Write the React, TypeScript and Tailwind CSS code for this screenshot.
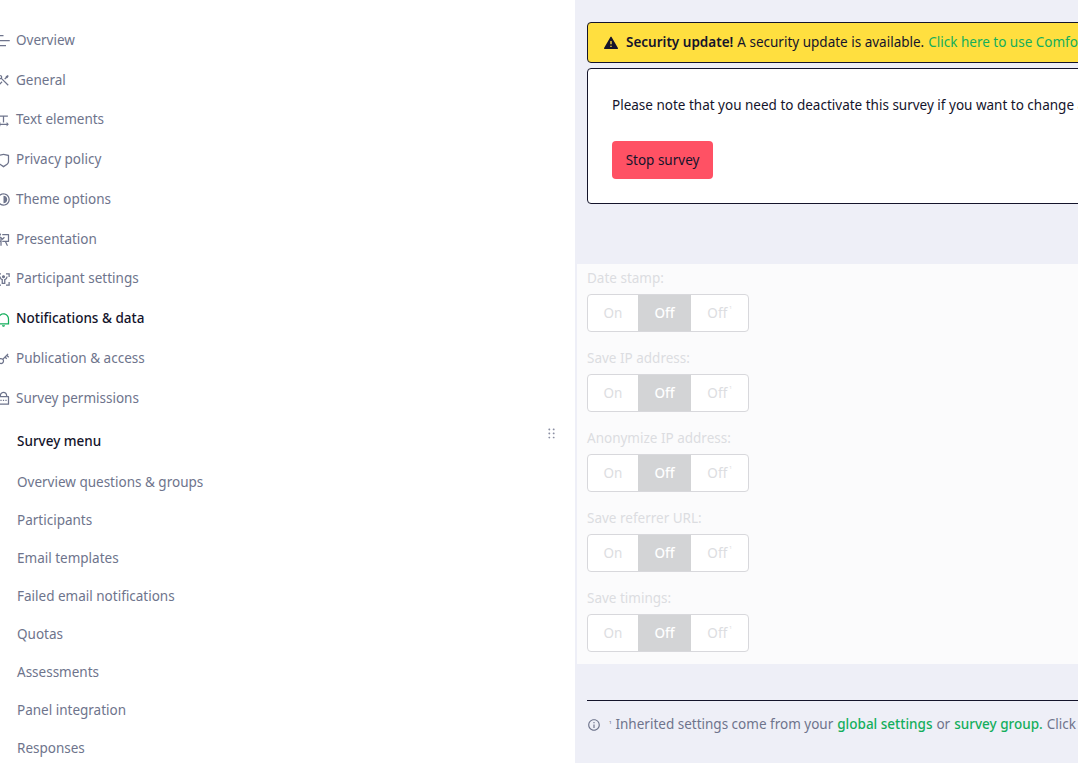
import type { IconType } from "react-icons";
import {
  RiAlertFill,
  RiBarChartHorizontalLine,
  RiBodyScanLine,
  RiContrastLine,
  RiDraggable,
  RiInformationLine,
  RiKey2Line,
  RiLockPasswordLine,
  RiNotificationLine,
  RiPresentationLine,
  RiShieldLine,
  RiTextSpacing,
  RiToolsLine,
} from "react-icons/ri";

const settingsItems: { label: string; icon: IconType; active?: boolean }[] = [
  { label: "Overview", icon: RiBarChartHorizontalLine },
  { label: "General", icon: RiToolsLine },
  { label: "Text elements", icon: RiTextSpacing },
  { label: "Privacy policy", icon: RiShieldLine },
  { label: "Theme options", icon: RiContrastLine },
  { label: "Presentation", icon: RiPresentationLine },
  { label: "Participant settings", icon: RiBodyScanLine },
  { label: "Notifications & data", icon: RiNotificationLine, active: true },
  { label: "Publication & access", icon: RiKey2Line },
  { label: "Survey permissions", icon: RiLockPasswordLine },
];

const menuItems = [
  "Overview questions & groups",
  "Participants",
  "Email templates",
  "Failed email notifications",
  "Quotas",
  "Assessments",
  "Panel integration",
  "Responses",
];

const toggles = ["Date stamp:", "Save IP address:", "Anonymize IP address:", "Save referrer URL:", "Save timings:"];

function Sidebar() {
  return (
    <aside className="flex w-[575px] shrink-0 flex-col bg-white pt-[20px]">
      {settingsItems.map((item) => {
        const Icon = item.icon;
        return (
          <div key={item.label} className="flex h-[39.75px] shrink-0 items-center">
            <Icon className={`ml-[-4px] mt-[2px] size-[15px] shrink-0 ${item.active ? "text-[#14ae5c]" : "text-[#6e748c]"}`} />
            <span className={`ml-[5px] text-[13.5px] ${item.active ? "font-medium text-[#14142b]" : "text-[#6e748c]"}`}>
              {item.label}
            </span>
          </div>
        );
      })}
      <div className="relative flex h-[37px] shrink-0 items-center pl-[17px] pt-[11px] text-[13.5px] font-medium text-[#14142b]">
        Survey menu
        <RiDraggable className="absolute left-[544px] top-[8px] size-[15px] text-[#8b8fa3]" />
      </div>
      <div className="mt-[9px] flex flex-col pl-[17px]">
        {menuItems.map((label) => (
          <div key={label} className="flex h-[38px] shrink-0 items-center text-[13.5px] text-[#6e748c]">
            {label}
          </div>
        ))}
      </div>
    </aside>
  );
}

function DisabledToggle({ label }: { label: string }) {
  return (
    <div className="h-[80px] shrink-0 pt-[4px]">
      <div className="h-[21px] text-[13.5px] leading-[21px] text-[#dcdde1]">{label}</div>
      <div className="mt-[5px] flex h-[38px] w-[162px] overflow-hidden rounded-[4px] border border-[#d8d8dc] bg-white text-[13.5px] text-[#dcdde1]">
        <div className="flex w-[50px] items-center justify-center">On</div>
        <div className="flex w-[53px] items-center justify-center bg-[#d3d4d6] font-medium text-white">Off</div>
        <div className="flex flex-1 items-center justify-center">
          Off<sup className="ml-[2px] text-[7px]">¹</sup>
        </div>
      </div>
    </div>
  );
}

function Main() {
  return (
    <main className="min-w-0 flex-1 overflow-hidden bg-[#eeeff7] pt-[22px] text-[13.5px]">
      <div className="ml-[12px] w-[700px]">
        <div className="flex h-[41px] items-center whitespace-nowrap rounded-[4px] border border-[#14142b] bg-[#ffdf3f] pl-[15px] text-[#14142b]">
          <RiAlertFill className="size-[16px] shrink-0" />
          <strong className="ml-[7px] font-semibold">Security update!</strong>
          <span className="ml-[4px]">A security update is available.</span>
          <span className="ml-[4px] text-[#14ae5c]">Click here to use ComfortUpdate</span>
        </div>
        <div className="mt-[5px] h-[136px] rounded-[4px] border border-[#14142b] bg-white pl-[24px] pt-[26px] text-[#14142b]">
          <p className="whitespace-nowrap leading-[21px]">
            Please note that you need to deactivate this survey if you want to change any settings
          </p>
          <button className="mt-[25px] flex h-[38px] w-[101px] items-center justify-center rounded-[4px] bg-[#ff5164] text-[#14142b]">
            Stop survey
          </button>
        </div>
      </div>
      <section className="ml-[2px] mt-[60px] flex h-[400px] flex-col bg-[#fbfbfc] pl-[10px]">
        {toggles.map((label) => (
          <DisabledToggle key={label} label={label} />
        ))}
      </section>
      <div className="ml-[12px] mt-[36px] flex w-[700px] items-center whitespace-nowrap border-t border-[#14142b] pt-[13px] leading-[21px] text-[#6e748c]">
        <RiInformationLine className="size-[14px] shrink-0" />
        <span className="ml-[8px] text-[7px] leading-none">¹</span>
        <span className="ml-[4px]">Inherited settings come from your</span>
        <span className="ml-[4px] font-medium text-[#14ae5c]">global settings</span>
        <span className="ml-[4px]">or</span>
        <span className="ml-[4px] font-medium text-[#14ae5c]">survey group.</span>
        <span className="ml-[4px]">Click</span>
        <span className="ml-[4px] font-medium text-[#14ae5c]">here</span>
      </div>
    </main>
  );
}

export default function App() {
  return (
    <div className="flex h-[763px] w-[1078px] overflow-hidden bg-white font-['Noto_Sans','Liberation_Sans',sans-serif]">
      <Sidebar />
      <Main />
    </div>
  );
}
